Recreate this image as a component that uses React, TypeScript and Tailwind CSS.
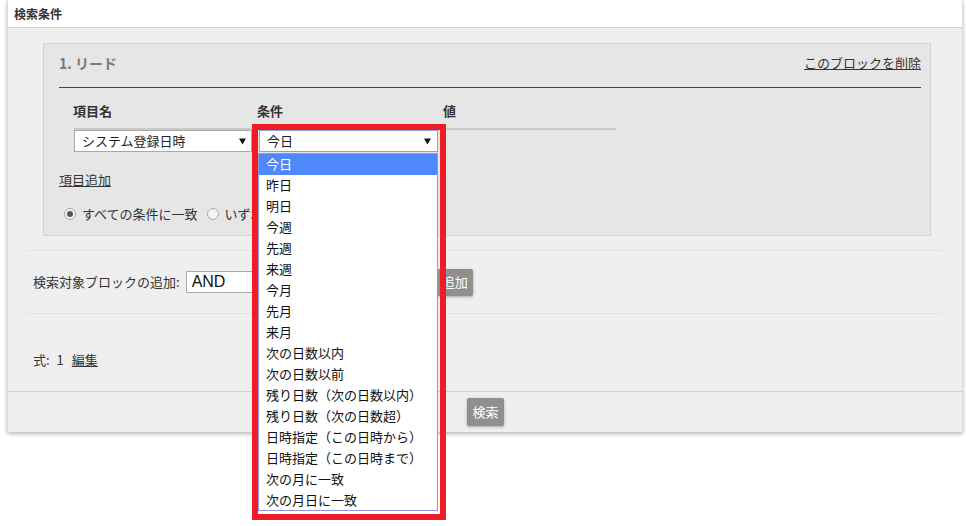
import React from "react";

const options = [
  "今日",
  "昨日",
  "明日",
  "今週",
  "先週",
  "来週",
  "今月",
  "先月",
  "来月",
  "次の日数以内",
  "次の日数以前",
  "残り日数（次の日数以内）",
  "残り日数（次の日数超）",
  "日時指定（この日時から）",
  "日時指定（この日時まで）",
  "次の月に一致",
  "次の月日に一致",
];

function Arrow() {
  return (
    <svg width="7" height="7" viewBox="0 0 7 7" className="shrink-0">
      <path d="M0 0.5 L7 0.5 L3.5 6.5 Z" fill="#111" />
    </svg>
  );
}

function Radio({ checked }: { checked?: boolean }) {
  return (
    <span className="w-[12px] h-[12px] rounded-full border border-[#a9a9a9] bg-[#f4f4f4] flex items-center justify-center shrink-0">
      {checked && <span className="w-[6px] h-[6px] rounded-full bg-[#555]" />}
    </span>
  );
}

export default function App() {
  return (
    <div className="relative w-[966px] h-[526px] bg-white overflow-hidden text-[13px] leading-[18px] text-[#222] font-['Meiryo','Noto_Sans_CJK_JP','Liberation_Sans',sans-serif]">
      <div className="ml-[7px] w-[956px] border-x border-[#dcdcdc] shadow-[0_2px_4px_rgba(0,0,0,0.28)]">
        {/* header */}
        <div className="h-[28px] border-b border-[#cfcfcf] bg-white flex items-center pl-[6px] text-[12px] font-bold text-[#333]">
          検索条件
        </div>

        {/* body */}
        <div className="bg-[#efefef] px-[20px]">
          <div className="pt-[15px] pl-[15px] pr-[11px] pb-[14px]">
            <div className="border border-[#d3d3d3] bg-[#e6e6e6] pl-[15px] pr-[9px] pb-[11px]">
              <div className="h-[44px] border-b border-[#444] flex items-center justify-between">
                <span className="text-[14px] font-bold text-[#7a7a7a] pb-[5px]">1. リード</span>
                <span className="underline text-[#333] pb-[5px]">このブロックを削除</span>
              </div>

              <div className="pl-[15px]">
                <div className="w-[542px]">
                  <div className="h-[42px] border-b-2 border-[#c9c9c9] flex items-end pb-[8px] font-bold text-[#333]">
                    <span className="w-[184px] -ml-[1px]">項目名</span>
                    <span className="w-[186px]">条件</span>
                    <span>値</span>
                  </div>
                  <div className="flex h-[22px]">
                    <div className="w-[178px] h-[22px] bg-white border border-[#a9a9a9] flex items-center justify-between pl-[7px] pr-[5px]">
                      <span>システム登録日時</span>
                      <Arrow />
                    </div>
                    <div className="w-[7px]" />
                    <div className="w-[179px] h-[22px] bg-white border border-[#8f9fdc] flex items-center justify-between pl-[7px] pr-[6px]">
                      <span>今日</span>
                      <Arrow />
                    </div>
                  </div>
                </div>
              </div>

              <div className="mt-[19px] pb-[1px]">
                <span className="underline text-[#333]">項目追加</span>
              </div>

              <div className="mt-[15px] pb-[1px] flex items-center pl-[5px] text-[#333]">
                <Radio checked />
                <span className="ml-[6px]">すべての条件に一致</span>
                <span className="ml-[9px]" />
                <Radio />
                <span className="ml-[6px]">いずれかの条件に一致</span>
              </div>
            </div>
          </div>

          <div className="border-t border-[#e2e2e2] h-[63px] flex items-center pl-[5px] text-[#333]">
            <span>検索対象ブロックの追加:</span>
            <div className="ml-[6px] w-[246px] h-[22px] bg-white border border-[#a9a9a9] flex items-center pl-[5px] text-[16px] text-[#111] font-['Liberation_Sans',sans-serif]">
              AND
            </div>
            <div className="ml-[5px] h-[27px] px-[5px] rounded-[2px] bg-[#8f8f8f] text-white flex items-center shadow-[0_1px_3px_rgba(0,0,0,0.3)]">
              追加
            </div>
          </div>

          <div className="border-t border-[#e2e2e2] h-[78px] pt-[37px] pl-[5px] text-[#333]">
            式: <span className="ml-[4px]">1</span>
            <span className="ml-[8px] underline">編集</span>
          </div>
        </div>

        {/* footer */}
        <div className="border-t border-[#cfcfcf] bg-[#efefef] h-[41px] flex items-center justify-center">
          <div className="h-[28px] px-[5px] rounded-[2px] bg-[#8f8f8f] text-white flex items-center shadow-[0_1px_3px_rgba(0,0,0,0.3)] ml-[1px]">
            検索
          </div>
        </div>
      </div>

      {/* dropdown list */}
      <div className="absolute left-[258px] top-[153px] w-[180px] h-[358px] bg-white border border-[#8f97d4]">
        {options.map((o, i) => (
          <div
            key={o}
            className={
              i === 0
                ? "h-[21px] flex items-center pl-[7px] pb-[2px] bg-[#4e88fb] text-white"
                : "h-[21px] flex items-center pl-[7px] pb-[2px] text-[#111]"
            }
          >
            {o}
          </div>
        ))}
      </div>

      {/* annotation box */}
      <div className="absolute left-[252px] top-[124px] w-[194px] h-[396px] border-[6px] border-[#ee1c25] pointer-events-none" />
    </div>
  );
}
